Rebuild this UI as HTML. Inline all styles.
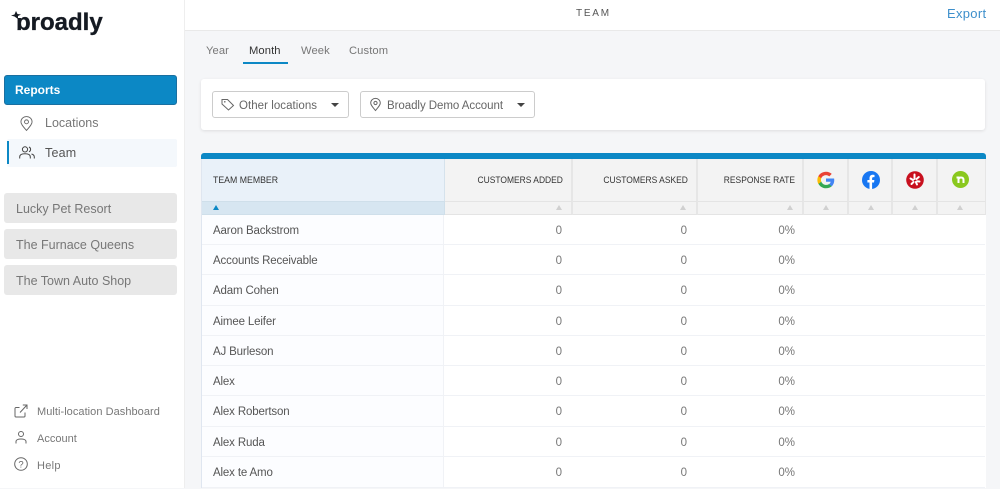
<!DOCTYPE html>
<html><head><meta charset="utf-8"><style>
*{box-sizing:border-box}
html,body{margin:0;padding:0;width:1000px;height:488px;overflow:hidden;background:#f5f6f8;font-family:"Liberation Sans",sans-serif;color:#555}
.a{position:absolute;white-space:nowrap}
.t{position:absolute;white-space:nowrap;line-height:16px;height:16px}
svg{position:absolute;overflow:visible}
.s{fill:none;stroke:#666;stroke-width:1}
.loc{position:absolute;left:4px;width:173px;height:30px;background:#e8e8e8;border-radius:3px;font-size:12.5px;letter-spacing:0;color:#777;line-height:32px;padding-left:12px}
.tab{position:absolute;top:43px;font-size:11.2px;letter-spacing:.1px;color:#777;line-height:16px}
.dd{position:absolute;top:91px;height:27px;background:#fff;border:1px solid #ccc;border-radius:3px;font-size:11.5px;color:#666;line-height:28px}
.h{position:absolute;top:159px;height:42px;background:#f3f3f3;border-right:2px solid #e6e6e6;font-size:9.5px;color:#333;line-height:43px;text-align:right;padding-right:8px}
.h u{display:inline-block;text-decoration:none;transform:scaleX(.89);transform-origin:right}
.f{position:absolute;top:201px;height:14px;background:#f3f3f3;border-top:1px solid #e4e4e4;border-bottom:1px solid #e4e4e4;border-right:2px solid #e6e6e6}
.f i{position:absolute;top:3px;width:0;height:0;border-left:3.5px solid transparent;border-right:3.5px solid transparent;border-bottom:5px solid #d0d0d0}
.r{position:absolute;left:202px;width:783px;height:31px;background:#fff;border-bottom:1px solid #f0f2f6;font-size:11.5px;color:#555}
.r b{position:absolute;left:0;top:0;width:242px;height:100%;background:#fcfdff;border-right:1px solid #f0f2f6;font-weight:400;padding-left:11px;line-height:32px;letter-spacing:-.15px;color:#555}
.r span{position:absolute;top:0;line-height:32px;color:#777;text-align:right}
</style></head><body>

<div class="a" style="left:0;top:0;width:185px;height:488px;background:#fff;border-right:1px solid #eee"></div>
<div class="a" style="left:185px;top:0;width:815px;height:31px;background:#fff;border-bottom:1px solid #e9e9e9"></div>

<div class="a" style="left:16px;top:6px;font-size:24px;font-weight:700;color:#151a22;line-height:34px;-webkit-text-stroke:.35px #151a22">broadly</div>
<div class="a" style="left:11px;top:9px;width:11px;height:9px;background:#fff"></div>
<svg style="left:11px;top:11px" width="11" height="10" viewBox="0 0 11 10"><path d="M0 4.500L3.500 3.500L5 0L6.500 3L10 3.500L7 5L7 8L3.500 5.500Z" fill="#151a22"/></svg>

<div class="a" style="left:4px;top:75px;width:173px;height:30px;background:#0c88c5;border:1px solid #1a6fa0;border-radius:3px;color:#fff;font-size:12px;font-weight:700;line-height:28px;padding-left:10px">Reports</div>

<svg style="left:20px;top:116px" width="13" height="15" viewBox="0 0 14 16"><path class="s" d="M7 15.500C3 11 1 8.500 1 6.200a6 5.700 0 0 1 12 0C13 8.500 11 11 7 15.500Z"/><circle class="s" cx="7" cy="6.200" r="2.100"/></svg>
<div class="t" style="left:45px;top:115px;font-size:12.5px;color:#777">Locations</div>

<div class="a" style="left:7px;top:139px;width:170px;height:28px;background:#f4f8fc;border-radius:2px"></div>
<div class="a" style="left:7px;top:141px;width:2px;height:23px;background:#0c88c5"></div>
<svg style="left:19px;top:146px" width="16" height="14" viewBox="0 0 16 14"><circle class="s" cx="6" cy="3.400" r="2.600" style="stroke:#444"/><path class="s" style="stroke:#444" d="M.7 12.500V11c0-2 2-3.200 5.300-3.200s5.300 1.200 5.300 3.200v1.500M10 1a2.600 2.600 0 0 1 0 4.800M12.500 8c1.500.4 2.800 1.300 2.800 3v1.500"/></svg>
<div class="t" style="left:45px;top:145px;font-size:12.5px;letter-spacing:.2px;color:#555">Team</div>

<div class="loc" style="top:193px">Lucky Pet Resort</div>
<div class="loc" style="top:229px">The Furnace Queens</div>
<div class="loc" style="top:265px">The Town Auto Shop</div>

<svg style="left:14px;top:404px" width="14" height="14" viewBox="0 0 14 14"><path class="s" d="M11 8.500V12a1 1 0 0 1-1 1H2a1 1 0 0 1-1-1V4.500a1 1 0 0 1 1-1h3.500M6 8.500L13 1M8.800 1H13V5"/></svg>
<div class="t" style="left:37px;top:404px;font-size:11px;letter-spacing:.05px;color:#777">Multi-location Dashboard</div>
<svg style="left:15px;top:431px" width="12" height="13" viewBox="0 0 12 13"><circle class="s" cx="6" cy="3" r="2.500"/><path class="s" d="M1 12.500V10.500C1 9 3 8 6 8s5 1 5 2.500v2"/></svg>
<div class="t" style="left:37px;top:431px;font-size:11px;color:#777">Account</div>
<svg style="left:14px;top:457px" width="14" height="14" viewBox="0 0 14 14"><circle class="s" cx="7" cy="7" r="6.300"/><text x="7" y="10.300" font-size="9.500" text-anchor="middle" fill="#666" font-family="Liberation Sans">?</text></svg>
<div class="t" style="left:37px;top:458px;font-size:11px;letter-spacing:.3px;color:#777">Help</div>

<div class="t" style="left:576px;top:6px;font-size:10px;letter-spacing:1.75px;color:#555">TEAM</div>
<div class="t" style="left:947px;top:6px;font-size:13px;letter-spacing:.3px;color:#3d8fcb">Export</div>

<div class="tab" style="left:206px">Year</div>
<div class="tab" style="left:249px;color:#333">Month</div>
<div class="a" style="left:243px;top:62px;width:45px;height:2px;background:#0c88c5"></div>
<div class="tab" style="left:301px">Week</div>
<div class="tab" style="left:349px">Custom</div>

<div class="a" style="left:201px;top:79px;width:784px;height:51px;background:#fff;border-radius:3px;box-shadow:0 1px 3px rgba(0,0,0,.1)"></div>
<div class="dd" style="left:212px;width:137px;padding-left:26px;letter-spacing:.05px">Other locations</div>
<svg style="left:221px;top:98px" width="14" height="13" viewBox="0 0 14 13"><path class="s" d="M1 1.500H6.500L12.500 7.500L7.500 12L1 6Z"/><circle cx="3.800" cy="3.800" r=".8" fill="#666"/></svg>
<svg style="left:331px;top:103px" width="8" height="4" viewBox="0 0 8 4"><path d="M0 0H8L4 4Z" fill="#444"/></svg>
<div class="dd" style="left:360px;width:175px;padding-left:26px;letter-spacing:-.05px">Broadly Demo Account</div>
<svg style="left:370px;top:98px" width="11" height="13" viewBox="0 0 11 13"><path class="s" d="M5.500 12.500C2.500 9 .7 7 .7 5a4.800 4.600 0 0 1 9.600 0C10.300 7 8.500 9 5.500 12.500Z"/><circle class="s" cx="5.500" cy="5" r="1.600"/></svg>
<svg style="left:517px;top:103px" width="8" height="4" viewBox="0 0 8 4"><path d="M0 0H8L4 4Z" fill="#444"/></svg>

<div class="a" style="left:201px;top:153px;width:785px;height:6px;background:#0c88c5;border-radius:3px 3px 0 0"></div>
<div class="a" style="left:201px;top:159px;width:785px;height:329px;background:#fff;border-left:1px solid #dfe6f0"></div>

<div class="h" style="left:202px;width:243px;background:#e9f1f9;border-right:1px solid #d5e2ec;text-align:left;padding-left:11px"><u style="transform-origin:left;transform:scaleX(.92)">TEAM MEMBER</u></div>
<div class="h" style="left:445px;width:128px"><u>CUSTOMERS ADDED</u></div>
<div class="h" style="left:573px;width:125px"><u>CUSTOMERS ASKED</u></div>
<div class="h" style="left:698px;width:106px;padding-right:7px"><u>RESPONSE RATE</u></div>
<div class="h" style="left:804px;width:45px"></div>
<div class="h" style="left:849px;width:44px"></div>
<div class="h" style="left:893px;width:45px"></div>
<div class="h" style="left:938px;width:48px;border-right:1px solid #e6e6e6"></div>

<div class="f" style="left:202px;width:243px;background:#d7e6f1;border-color:#cfdfea;border-right:1px solid #cfdfea"><i style="left:11px;border-bottom-color:#0c88c5"></i></div>
<div class="f" style="left:445px;width:128px"><i style="left:111px"></i></div>
<div class="f" style="left:573px;width:125px"><i style="left:107px"></i></div>
<div class="f" style="left:698px;width:106px"><i style="left:89px"></i></div>
<div class="f" style="left:804px;width:45px"><i style="left:19px"></i></div>
<div class="f" style="left:849px;width:44px"><i style="left:19px"></i></div>
<div class="f" style="left:893px;width:45px"><i style="left:19px"></i></div>
<div class="f" style="left:938px;width:48px;border-right:1px solid #e6e6e6"><i style="left:19px"></i></div>

<svg style="left:817px;top:171px" width="18" height="18" viewBox="0 0 48 48"><path fill="#4285F4" d="M46 24.500c0-1.600-.1-3.100-.4-4.500H24v8.700h12.400c-.5 2.800-2.200 5.200-4.600 6.800v5.600h7.400C43.500 36.700 46 31.100 46 24.500z"/><path fill="#34A853" d="M24 46c6.200 0 11.400-2 15.200-5.500l-7.400-5.600c-2 1.400-4.700 2.200-7.800 2.200-6 0-11-4-12.800-9.500H3.600v5.900C7.300 40.900 15 46 24 46z"/><path fill="#FBBC05" d="M11.200 28.600c-.5-1.400-.7-2.900-.7-4.600s.3-3.200.7-4.600v-5.900H3.600C2 16.500 1 20.100 1 24s1 7.500 2.600 10.500z"/><path fill="#EA4335" d="M24 10.900c3.400 0 6.400 1.200 8.800 3.400l6.500-6.500C35.400 4.200 30.200 2 24 2 15 2 7.300 7.100 3.600 13.500l7.600 5.900C13 14.900 18 10.900 24 10.900z"/></svg>
<svg style="left:862px;top:171px" width="18" height="18" viewBox="0 0 18 18"><circle cx="9" cy="9" r="9" fill="#1877f2"/><path fill="#fff" d="M7.500 18V11.500H5.400V9H7.500V7.200C7.500 5 8.800 3.800 10.700 3.800c.9 0 1.800.2 1.800.2v2.100h-1c-1 0-1.400.6-1.400 1.300V9h2.300l-.4 2.500h-1.900V18z"/></svg>
<svg style="left:906px;top:171px" width="18" height="18" viewBox="0 0 18 18"><circle cx="9" cy="9" r="8.800" fill="#c8101e"/><path stroke="#fff" stroke-width="2" stroke-linecap="round" d="M8.500 3.500V8M4.500 7.500L7 9M5.500 13L7.500 11M11 13.500L9.800 11M13.500 10.500L11 10.200M12.800 6L10.500 8"/></svg>
<svg style="left:952px;top:171px" width="17" height="17" viewBox="0 0 17 17"><circle cx="8.500" cy="8.500" r="8.500" fill="#8ac81e"/><path fill="none" stroke="#fff" stroke-width="2" d="M4.500 6.500H6.500V12M6.500 8C7 6.800 8 6.500 9 6.500C10.700 6.500 11.500 7.500 11.500 9V12"/></svg>

<div class="r" style="top:215px;height:30px"><b>Aaron Backstrom</b><span style="left:242px;width:118px">0</span><span style="left:370px;width:115px">0</span><span style="left:495px;width:98px">0%</span></div>
<div class="r" style="top:245px;height:30px"><b>Accounts Receivable</b><span style="left:242px;width:118px">0</span><span style="left:370px;width:115px">0</span><span style="left:495px;width:98px">0%</span></div>
<div class="r" style="top:275px"><b>Adam Cohen</b><span style="left:242px;width:118px">0</span><span style="left:370px;width:115px">0</span><span style="left:495px;width:98px">0%</span></div>
<div class="r" style="top:306px;height:30px"><b>Aimee Leifer</b><span style="left:242px;width:118px">0</span><span style="left:370px;width:115px">0</span><span style="left:495px;width:98px">0%</span></div>
<div class="r" style="top:336px;height:30px"><b>AJ Burleson</b><span style="left:242px;width:118px">0</span><span style="left:370px;width:115px">0</span><span style="left:495px;width:98px">0%</span></div>
<div class="r" style="top:366px;height:30px"><b>Alex</b><span style="left:242px;width:118px">0</span><span style="left:370px;width:115px">0</span><span style="left:495px;width:98px">0%</span></div>
<div class="r" style="top:396px"><b>Alex Robertson</b><span style="left:242px;width:118px">0</span><span style="left:370px;width:115px">0</span><span style="left:495px;width:98px">0%</span></div>
<div class="r" style="top:427px;height:30px"><b>Alex Ruda</b><span style="left:242px;width:118px">0</span><span style="left:370px;width:115px">0</span><span style="left:495px;width:98px">0%</span></div>
<div class="r" style="top:457px"><b>Alex te Amo</b><span style="left:242px;width:118px">0</span><span style="left:370px;width:115px">0</span><span style="left:495px;width:98px">0%</span></div>

</body></html>
